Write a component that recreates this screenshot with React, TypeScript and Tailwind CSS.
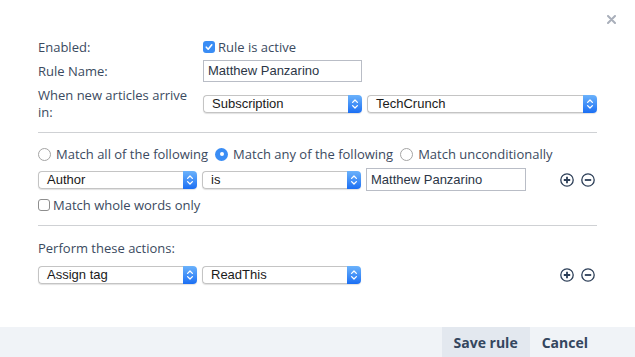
import { useState } from "react";

const label = "font-['Open_Sans',sans-serif] text-[13px] leading-[17px] text-[#3b4a60]";
const field = "font-['Liberation_Sans',Arial,sans-serif] text-[13px] text-[#1a1a1a]";

function Select({ value, width = "w-[159px]" }: { value: string; width?: string }) {
  return (
    <div className={`flex h-[18px] ${width} shadow-[0_1px_1px_rgba(0,0,0,0.12)] rounded-[4px]`}>
      <div
        className={`flex-1 flex items-center pl-[8px] border border-r-0 border-[#c4c4c4] rounded-l-[4px] bg-white ${field}`}
      >
        {value}
      </div>
      <div className="w-[14px] h-full rounded-r-[4px] bg-linear-to-b from-[#6bb2fb] to-[#1a6ef3] flex items-center justify-center">
        <svg width="14" height="18" viewBox="0 0 14 18" fill="none">
          <path d="M4.6 7.4 L7 5 L9.4 7.4" stroke="white" strokeWidth="1.3" strokeLinecap="round" strokeLinejoin="round" />
          <path d="M4.6 10.6 L7 13 L9.4 10.6" stroke="white" strokeWidth="1.3" strokeLinecap="round" strokeLinejoin="round" />
        </svg>
      </div>
    </div>
  );
}

function TextInput({ value, width = "w-[159px]", height = "h-[22px]" }: { value: string; width?: string; height?: string }) {
  return (
    <div
      className={`${width} ${height} flex items-center pl-[4px] border border-[#b9bdc6] bg-white font-['Liberation_Sans',Arial,sans-serif] text-[13px] text-[#2c3646]`}
    >
      {value}
    </div>
  );
}

function Checkbox({ checked }: { checked: boolean }) {
  if (checked) {
    return (
      <span className="w-[12px] h-[12px] rounded-[3px] bg-[#3a8df5] flex items-center justify-center">
        <svg width="10" height="10" viewBox="0 0 10 10" fill="none">
          <path d="M2.3 5.2 L4.2 7.2 L7.8 2.8" stroke="white" strokeWidth="1.6" strokeLinecap="round" strokeLinejoin="round" />
        </svg>
      </span>
    );
  }
  return <span className="w-[12px] h-[12px] rounded-[3px] border border-[#8e8e8e] bg-white" />;
}

function Radio({ checked }: { checked: boolean }) {
  if (checked) {
    return (
      <span className="w-[13px] h-[13px] rounded-full bg-[#3a8df5] flex items-center justify-center">
        <span className="w-[4px] h-[4px] rounded-full bg-white" />
      </span>
    );
  }
  return <span className="w-[13px] h-[13px] rounded-full border border-[#a4a4a4] bg-white" />;
}

function PlusMinus() {
  return (
    <div className="ml-auto mr-[2px] flex items-center gap-[7px]">
      <svg width="14" height="14" viewBox="0 0 14 14" fill="none">
        <circle cx="7" cy="7" r="6.2" stroke="#2c3e57" strokeWidth="1.3" />
        <path d="M7 3.8 V10.2 M3.8 7 H10.2" stroke="#2c3e57" strokeWidth="1.8" />
      </svg>
      <svg width="14" height="14" viewBox="0 0 14 14" fill="none">
        <circle cx="7" cy="7" r="6.2" stroke="#2c3e57" strokeWidth="1.3" />
        <path d="M3.8 7 H10.2" stroke="#2c3e57" strokeWidth="1.8" />
      </svg>
    </div>
  );
}

export default function App() {
  const [match, setMatch] = useState("any");

  return (
    <div className="relative w-[635px] h-[357px] bg-white flex flex-col overflow-hidden">
      <button className="absolute top-[15px] right-[19px] text-[#a9afba]">
        <svg width="9" height="9" viewBox="0 0 9 9">
          <path d="M1 1 L8 8 M8 1 L1 8" stroke="currentColor" strokeWidth="2" strokeLinecap="round" />
        </svg>
      </button>

      <div className="flex-1 px-[38px] pt-[38px]">
        <div className="flex items-center h-[18px]">
          <div className={`w-[165px] ${label}`}>Enabled:</div>
          <div className="flex items-center gap-[3px]">
            <Checkbox checked />
            <span className={label}>Rule is active</span>
          </div>
        </div>

        <div className="flex items-center mt-[4px]">
          <div className={`w-[165px] ${label}`}>Rule Name:</div>
          <TextInput value="Matthew Panzarino" />
        </div>

        <div className="flex items-center mt-[5px]">
          <div className={`w-[165px] pr-[10px] ${label}`}>When new articles arrive in:</div>
          <div className="flex gap-[5px]">
            <Select value="Subscription" />
            <Select value="TechCrunch" width="w-[230px]" />
          </div>
        </div>

        <div className="mt-[11px] h-px bg-[#cfd1d4]" />

        <div className="flex items-center h-[18px] mt-[12px] gap-[7px]">
          {[
            ["all", "Match all of the following"],
            ["any", "Match any of the following"],
            ["none", "Match unconditionally"],
          ].map(([key, text]) => (
            <label key={key} className="flex items-center gap-[5px]" onClick={() => setMatch(key)}>
              <Radio checked={match === key} />
              <span className={label}>{text}</span>
            </label>
          ))}
        </div>

        <div className="flex items-center mt-[5px] h-[23px] gap-[5px]">
          <Select value="Author" />
          <Select value="is" />
          <TextInput value="Matthew Panzarino" width="w-[160px]" height="h-[23px]" />
          <PlusMinus />
        </div>

        <div className="flex items-center h-[18px] mt-[5px] gap-[3px]">
          <Checkbox checked={false} />
          <span className={label}>Match whole words only</span>
        </div>

        <div className="mt-[11px] h-px bg-[#cfd1d4]" />

        <div className={`mt-[13px] h-[18px] flex items-center ${label}`}>Perform these actions:</div>

        <div className="flex items-center mt-[9px] h-[18px] gap-[5px]">
          <Select value="Assign tag" />
          <Select value="ReadThis" />
          <PlusMinus />
        </div>
      </div>

      <div className="h-[30px] bg-[#f0f3f7] flex justify-end pr-[35px] font-['Open_Sans',sans-serif] text-[14px] font-bold text-[#34465e]">
        <button className="h-full px-[12px] bg-[#e3e8ef]">Save rule</button>
        <button className="h-full px-[12px]">Cancel</button>
      </div>
    </div>
  );
}
